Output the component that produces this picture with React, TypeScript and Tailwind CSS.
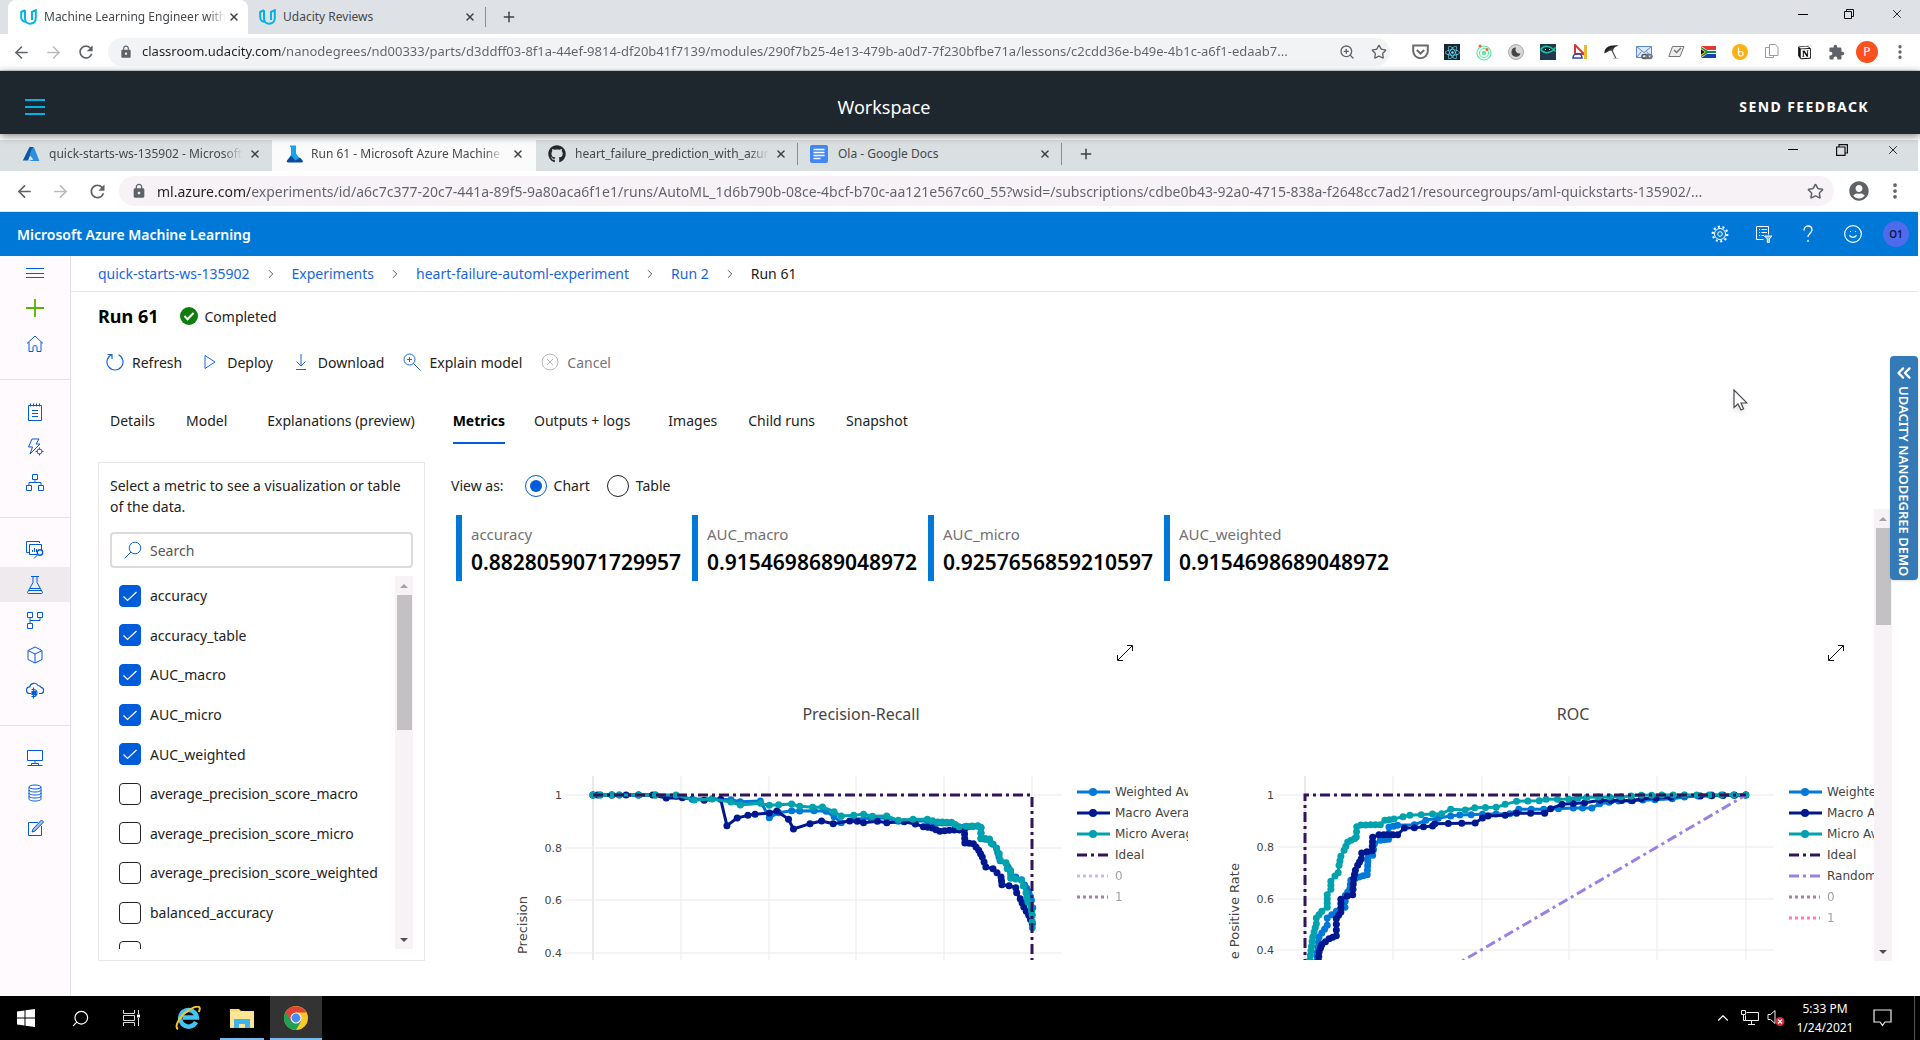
import React from "react";
import {
  ArrowLeft, ArrowRight, Star, ZoomIn, X, Plus, MoreVertical, ChevronRight, ChevronUp, ChevronsLeft, Search, Smile,
} from "lucide-react";
import { FaGithub, FaReact, FaPuzzlePiece, FaGetPocket, FaUserCircle } from "react-icons/fa";
import { MdLock, MdRefresh, MdExtension } from "react-icons/md";
import { RiNotionFill } from "react-icons/ri";

/* ---------- small drawings ---------- */

const Svg = ({ size = 18, sw = 1, children, box = 18 }: { size?: number; sw?: number; box?: number; children: React.ReactNode }) => (
  <svg width={size} height={size} viewBox={`0 0 ${box} ${box}`} fill="none" stroke="currentColor" strokeWidth={sw} aria-hidden="true" className="shrink-0">
    {children}
  </svg>
);

const UdacityLogo = () => (
  <svg width="17" height="16" viewBox="0 0 17 16" fill="none" stroke="#02b3e4" strokeWidth="2" className="shrink-0">
    <path d="M5 1.200 1.200 3v5c0 3 2 4.800 4.400 4.800" />
    <path d="M5 1.200v8.300c0 3.200 2.300 5.200 5.200 5.200 3.200 0 5.600-2.200 5.600-5.600V1.200L12 3v8" />
  </svg>
);

const AzureLogo = () => (
  <svg width="18" height="16" viewBox="0 0 18 16" className="shrink-0">
    <path d="M7.500 1h4L6 14.500H.8z" fill="#0a5aa8" />
    <path d="M9.600 3.400 12 1.200 17.400 15H6.200l5.200-1.600L7.600 9z" fill="#2a8fe0" />
  </svg>
);

const MlLogo = () => (
  <svg width="18" height="18" viewBox="0 0 18 18" className="shrink-0">
    <path d="M4 .5h6v8l6.300 8.300H1.500L5 10V2H4z" fill="#1aa3e8" />
    <path d="M5 10.500 1 15.500c-.8 1 .2 2 1 2h13.500c1.500 0 1.800-1.200 1-2L14 12.500l-4.500 3z" fill="#0b4a9e" />
  </svg>
);

const DocsLogo = () => (
  <svg width="18" height="18" viewBox="0 0 18 18" className="shrink-0">
    <rect width="18" height="18" rx="2" fill="#4285f4" />
    <path d="M3.500 4.500h11M3.500 7.500h11M3.500 10.500h11M3.500 13.500h7" stroke="#fff" strokeWidth="1.600" />
  </svg>
);

const Restore = ({ big = false }: { big?: boolean }) => (
  <svg width={big ? 12 : 10} height={big ? 12 : 10} viewBox="0 0 10 10" fill="none" stroke="#111" strokeWidth="1">
    <path d="M.5 2.500h7v7h-7zM2.500 2.500v-2h7v7h-2" />
  </svg>
);

/* ---------- browser chrome ---------- */

function TabTitle({ children, className }: { children: string; className: string }) {
  return (
    <span className={`overflow-hidden whitespace-nowrap text-left text-[12px] leading-4 text-[#45494d] ${className}`}>{children}</span>
  );
}

const fade = "[mask-image:linear-gradient(to_right,#000_90%,transparent)]";

function CloseX() {
  return (
    <button aria-label="Close tab" className="shrink-0 text-[#3c4043]">
      <X size={12} strokeWidth={3} />
    </button>
  );
}

function WindowButtons({ className, gap, big }: { className: string; gap: string; big?: boolean }) {
  return (
    <div className={`ml-auto flex items-center ${gap} ${className}`}>
      <button aria-label="Minimize"><span className="block h-px w-2.5 bg-black" /></button>
      <button aria-label="Restore"><Restore big={big} /></button>
      <button aria-label="Close"><X size={14} strokeWidth={1.500} color="#111" /></button>
    </div>
  );
}

function Extensions() {
  return (
    <div className="ml-3.5 flex items-center">
      {[
        <svg key="a" width="17" height="16" viewBox="0 0 17 16" fill="none" stroke="#6b6b6b" strokeWidth="2"><path d="M1.200 1.500h14.600v5.500c0 4-3.300 7.200-7.300 7.200S1.200 11 1.200 7z" /><path d="m4.800 6 3.700 3.500L12.200 6" /></svg>,
        <span key="b" className="flex size-4 items-center justify-center bg-[#20232a]"><FaReact size={15} color="#61dafb" /></span>,
        <svg key="c" width="18" height="18" viewBox="0 0 18 18" fill="none" stroke="#5eeaa0" strokeWidth="1.200">
          <circle cx="9" cy="10" r="7" /><circle cx="9" cy="10" r="4.500" /><circle cx="9" cy="10" r="1.700" fill="#5eeaa0" />
          <circle cx="5" cy="3" r="1.500" fill="#f5622e" stroke="none" /><circle cx="12" cy="6.500" r="1.500" fill="#f5622e" stroke="none" />
        </svg>,
        <svg key="d" width="16" height="16" viewBox="0 0 16 16"><circle cx="8" cy="8" r="7.500" fill="#d6d6d6" stroke="#aaa" /><path d="M8 3.500a4.600 4.600 0 1 0 4.500 5.800A4 4 0 0 1 8 3.500z" fill="#444" /></svg>,
        <svg key="e" width="16" height="16" viewBox="0 0 16 16"><path d="M0 0h16v16H0z" fill="#22364f" /><path d="M.5 5.500C4 1 10 1 15.500 7.500M15.500 3.500C11 10 4 10 .5 5.500" fill="none" stroke="#1fc59a" strokeWidth="1.500" /><path d="M4.500 4.500h6v2h-6z" fill="#111c2c" /><path d="M5 5h1v1H5zM9 5h1v1H9z" fill="#fff" /></svg>,
        <svg key="f" width="16" height="16" viewBox="0 0 16 16" fill="none"><path d="M3 1v9h9z" stroke="#d33a3a" strokeWidth="2" /><path d="M1 14a4.500 4.500 0 0 1 9 0z" stroke="#2647b8" strokeWidth="1.600" /><path d="M12 1h3v14h-3z" fill="#edb72f" /></svg>,
        <svg key="g" width="16" height="16" viewBox="0 0 16 16" fill="none"><path d="M.5 9.500C0 4 5 .5 14.500 1.500L8 4z" fill="#222" /><path d="M.5 9.500 7.500 3.500l7-2C10 3 9.500 5 9 7L6 6.500z" fill="#333" /><path d="m7 4.500 5 10" stroke="#555" strokeWidth="1.200" /><path d="M8 15c2-1.500 5-1.500 7 0z" fill="#bbb" /></svg>,
        <svg key="h" width="17" height="15" viewBox="0 0 17 15" fill="none"><path d="M.5 1.500h15v11H.5z" fill="#dbe9fb" stroke="#5d88c9" /><path d="m.5 1.500 7.500 6 7.500-6M.5 12.500l5-6m10 6-5-6" stroke="#5d88c9" /><rect x="6" y="9.500" width="6" height="4" rx="2" stroke="#555" strokeWidth="1.500" /><rect x="10" y="9.500" width="6" height="4" rx="2" stroke="#777" strokeWidth="1.500" /></svg>,
        <svg key="i" width="17" height="14" viewBox="0 0 17 14" fill="#eee" stroke="#777"><path d="M4.500 1.500h11.500l-4 10H.8z" /><path d="m6 5 2.500 2.500L13 3" fill="none" strokeWidth="1.500" /></svg>,
        <svg key="j" width="15" height="12" viewBox="0 0 15 12"><path d="M0 0h15v4H0z" fill="#e03c31" /><path d="M0 8h15v4H0z" fill="#1a3fb0" /><path d="M0 0l6 4h9v4H6l-6 4z" fill="#fff" /><path d="M0 1l7 4h8v2H7l-7 4z" fill="#0a8a4a" /><path d="M0 2l5 4-5 4z" fill="#ffb81c" /><path d="M0 3.500 3.500 6 0 8.500z" fill="#111" /></svg>,
        <svg key="k" width="16" height="16" viewBox="0 0 16 16"><circle cx="8" cy="8" r="8" fill="#fbb216" /><path d="M6.500 3.500v6.500a2.300 2.300 0 1 0 2-2.500L6.500 8.500" fill="none" stroke="#fff" strokeWidth="1.200" /></svg>,
        <svg key="l" width="14" height="16" viewBox="0 0 14 16" fill="#fff" stroke="#9a9a9a"><path d="M.5 3.500h8v10h-8z" /><path d="M4.500.5h6l2.500 3v8H4.500z" /></svg>,
        <RiNotionFill key="m" size={17} color="#111" />,
        <MdExtension key="n" size={17} color="#5f6368" />,
      ].map((icon, i) => (
        <button key={i} aria-label={`Extension ${i + 1}`} className="flex h-7 w-8 items-center justify-center">{icon}</button>
      ))}
      <button aria-label="Profile" className="ml-1 flex size-[22px] items-center justify-center rounded-full bg-[#fa511f] text-[12px] text-white">P</button>
      <button aria-label="Menu" className="ml-3 flex w-5 justify-center"><MoreVertical size={18} strokeWidth={2.500} color="#5f6368" /></button>
    </div>
  );
}

function OuterBrowser() {
  return (
    <header className="shrink-0">
      <div className="flex h-[34px] items-end bg-[#dee1e6] pl-2">
        <div className="flex h-[34px] w-60 items-center rounded-t-lg bg-white pl-3">
          <UdacityLogo />
          <TabTitle className={`ml-[7px] w-[182px] ${fade}`}>Machine Learning Engineer with M</TabTitle>
          <span className="ml-0.5 flex"><CloseX /></span>
        </div>
        <div className="flex h-[34px] w-[238px] items-center pl-[11px]">
          <UdacityLogo />
          <TabTitle className="ml-[7px] flex-1">Udacity Reviews</TabTitle>
          <CloseX />
          <span className="ml-[9px] h-5 w-px bg-[#8a8d91]" />
        </div>
        <button aria-label="New tab" className="flex h-[34px] items-center pl-[15px]"><Plus size={16} strokeWidth={2.200} color="#3c4043" /></button>
        <WindowButtons className="h-[28px] self-start pr-4" gap="gap-9" />
      </div>
      <div className="flex h-[37px] items-center border-b border-[#d5dadd] bg-white pl-3 pr-2.5 text-[#5f6368]">
        <button aria-label="Back" className="w-8"><ArrowLeft size={19} strokeWidth={2} /></button>
        <button aria-label="Forward" className="w-8 text-[#b9bbbe]"><ArrowRight size={19} strokeWidth={2} /></button>
        <button aria-label="Reload" className="w-8"><MdRefresh size={20} /></button>
        <div className="flex h-7 min-w-0 flex-1 items-center rounded-full bg-[#f1f3f4] pl-[11px] pr-[3px]">
          <MdLock size={14} className="shrink-0" />
          <input
            aria-label="Address"
            readOnly
            className="ml-[9px] min-w-0 flex-1 bg-[linear-gradient(to_right,#202124_139px,#5f6368_139px)] bg-clip-text text-[13px] text-transparent outline-none"
            value="classroom.udacity.com/nanodegrees/nd00333/parts/d3ddff03-8f1a-44ef-9814-df20b41f7139/modules/290f7b25-4e13-479b-a0d7-7f230bfbe71a/lessons/c2cdd36e-b49e-4b1c-a6f1-edaab7..."
          />
          <button aria-label="Zoom" className="w-8"><ZoomIn size={16} /></button>
          <button aria-label="Bookmark"><Star size={16} /></button>
        </div>
        <Extensions />
      </div>
    </header>
  );
}

function WorkspaceBar() {
  return (
    <div className="relative z-10 flex h-[63px] shrink-0 items-center bg-[#1e272e] pl-[25px] pr-[51px] pt-2 shadow-[0_2px_8px_rgba(0,0,0,0.5)]">
      <button aria-label="Open navigation" className="flex w-10 flex-col gap-[5px]">
        <span className="h-0.5 w-5 bg-[#02b3e4]" />
        <span className="h-0.5 w-5 bg-[#02b3e4]" />
        <span className="h-0.5 w-5 bg-[#02b3e4]" />
      </button>
      <h1 className="flex-1 pr-[26px] text-center text-[18px] leading-6 text-white">Workspace</h1>
      <button className="w-[140px] whitespace-nowrap text-right text-[14px] font-bold tracking-widest text-white">SEND FEEDBACK</button>
    </div>
  );
}

function InnerBrowser() {
  return (
    <div className="shrink-0 pr-0.5 pt-1.5">
      <div className="flex h-[31px] items-stretch bg-[#dadfe2]">
        <div className="flex w-[272px] items-center rounded-br-lg pb-1 pl-[22px]">
          <AzureLogo />
          <TabTitle className={`ml-[9px] w-[193px] ${fade}`}>quick-starts-ws-135902 - Microsoft</TabTitle>
          <span className="ml-[7px] flex"><CloseX /></span>
        </div>
        <div className="flex w-[264px] items-center bg-[#fbfbfb] pb-1 pl-[14px]">
          <MlLogo />
          <TabTitle className={`ml-[7px] w-[193px] ${fade}`}>Run 61 - Microsoft Azure Machine</TabTitle>
          <span className="ml-[8px] flex"><CloseX /></span>
        </div>
        <div className="flex w-[263px] items-center pb-1 pl-[12px]">
          <FaGithub size={18} color="#24292e" className="shrink-0" />
          <TabTitle className={`ml-[9px] w-[194px] ${fade}`}>heart_failure_prediction_with_azure</TabTitle>
          <span className="ml-[6px] flex"><CloseX /></span>
          <span className="ml-[10px] h-[22px] w-px bg-[#8a8d91]" />
        </div>
        <div className="flex w-[263px] items-center pb-1 pl-[11px]">
          <DocsLogo />
          <TabTitle className="ml-[10px] flex-1">Ola - Google Docs</TabTitle>
          <CloseX />
          <span className="ml-[10px] h-[22px] w-px bg-[#8a8d91]" />
        </div>
        <button aria-label="New tab" className="pb-1 pl-4"><Plus size={16} strokeWidth={2.200} color="#3c4043" /></button>
        <WindowButtons className="pb-3 pr-[18px]" gap="gap-[38px]" big />
      </div>
      <div className="flex h-[41px] items-center border-b border-[#e3e6e8] bg-white pl-[15px] pr-[13px] text-[#5f6368]">
        <button aria-label="Back" className="w-9"><ArrowLeft size={19} strokeWidth={2.200} /></button>
        <button aria-label="Forward" className="w-9 text-[#b9bbbe]"><ArrowRight size={19} strokeWidth={2.200} /></button>
        <button aria-label="Reload" className="w-8"><MdRefresh size={21} /></button>
        <div className="flex h-[30px] min-w-0 flex-1 items-center rounded-full bg-[#f6f2f6] pl-3 pr-2.5">
          <MdLock size={16} className="shrink-0" />
          <input
            aria-label="Address of remote page"
            readOnly
            className="ml-2.5 min-w-0 flex-1 bg-[linear-gradient(to_right,#202124_93px,#5f6368_93px)] bg-clip-text text-[14px] text-transparent outline-none"
            value="ml.azure.com/experiments/id/a6c7c377-20c7-441a-89f5-9a80aca6f1e1/runs/AutoML_1d6b790b-08ce-4bcf-b70c-aa121e567c60_55?wsid=/subscriptions/cdbe0b43-92a0-4715-838a-f2648cc7ad21/resourcegroups/aml-quickstarts-135902/..."
          />
          <button aria-label="Bookmark page"><Star size={17} strokeWidth={2.200} /></button>
        </div>
        <button aria-label="Account" className="ml-[15px]"><FaUserCircle size={20} /></button>
        <button aria-label="More" className="ml-4"><MoreVertical size={20} strokeWidth={2.500} /></button>
      </div>
    </div>
  );
}

/* ---------- Azure ML studio ---------- */

function AzureBar() {
  return (
    <div className="flex h-11 shrink-0 items-center justify-between bg-[#0078d7] pl-[17px] pr-[9px] text-white">
      <span className="text-[14px] font-semibold">Microsoft Azure Machine Learning</span>
      <div className="flex items-center gap-[26px]">
        <button aria-label="Settings">
          <Svg><circle cx="9" cy="9" r="5.500" /><circle cx="9" cy="9" r="2.300" /><circle cx="9" cy="9" r="7.300" strokeWidth="2.200" strokeDasharray="2 2.580" /></Svg>
        </button>
        <button aria-label="Filter list">
          <Svg><path d="M8.500 14.500h-7v-13h12v8M4 4.500h1M6.500 4.500H12M4 7.500h1M6.500 7.500H12M4 10.500h1M6.500 10.500H9" /><path d="M9.500 11h7.500l-2.700 3v3.500h-2V14z" fill="currentColor" fillOpacity=".5" /></Svg>
        </button>
        <button aria-label="Help">
          <Svg sw={1.300}><path d="M5 5.500C5 3 6.500 1 9 1s4 1.500 4 4c0 3-4 3.500-4 7M9 15v2" /></Svg>
        </button>
        <button aria-label="Feedback"><Smile size={20} strokeWidth={1.400} /></button>
        <button aria-label="Account O1" className="-ml-1.5 flex size-[26px] items-center justify-center rounded-full bg-[#4f6bed] text-[10px] font-semibold text-[#14143c]">O1</button>
      </div>
    </div>
  );
}

const navGroups = [
  [
    { name: "Notebooks", icon: <Svg><path d="M2.500 2.500h13v15h-13zM4.500.5v3M7.500.5v3M10.500.5v3M13.500.5v3M6 7.500h6M6 10.500h6M6 13.500h6" /></Svg> },
    { name: "Automated ML", icon: <Svg><path d="M6 1h7l-3 5h4L4 16l2.500-7h-4L6 1z" /><circle cx="13.500" cy="13.500" r="2.500" fill="#fffafe" /><path d="M13.500 9.500v2M13.500 15.500v2M9.500 13.500h2M15.500 13.500h2" /></Svg> },
    { name: "Designer", icon: <Svg><path d="M6.500 1.500h5v5h-5zM.5 12.500h5v5h-5zM12.500 12.500h5v5h-5zM9 6.500v3M3 12.500v-3h12v3" /></Svg> },
  ],
  [
    { name: "Datasets", icon: <Svg><path d="M3 11.500H.5v-11h13V2M11 13.500H3.500v-10h12V9M6.500 11V9M8.500 11V7M10.500 11V8" /><circle cx="14" cy="11.500" r="2.700" strokeWidth="1.400" /><path d="m12 13.500-4 4" /></Svg> },
    { name: "Experiments", active: true, icon: <Svg><path d="M5 .5h8M7 .5v6L1.700 16c-.4.8 0 1.500.8 1.500h13c.8 0 1.200-.7.8-1.500L11 6.500v-6M4 12.500h10M3 14.500h12" /></Svg> },
    { name: "Pipelines", icon: <Svg><path d="M1.500 1.500h5v5h-5zM11.500 1.500h5v5h-5zM1.500 12.500h5v5h-5zM4 6.500v6M4 9.500h10v-3" /></Svg> },
    { name: "Models", icon: <Svg><path d="m9 1 7 3.500v9L9 17l-7-3.500v-9zM2 4.500 9 8l7-3.500M9 8v9" /></Svg> },
    { name: "Endpoints", icon: <Svg sw={1.200}><path d="M5 12.500H4a3.300 3.300 0 0 1-.3-6.600A4.500 4.500 0 0 1 12 4.500a3.500 3.500 0 0 1 3 1.800 3.200 3.200 0 0 1 .5 6.200H13" /><path d="M5.500 8.500h2a3.500 3.500 0 1 1 0 7h-2M7.500 6.500v11" /><path d="M6 10.500h3.500v3H6z" fill="currentColor" /></Svg> },
  ],
  [
    { name: "Compute", icon: <Svg><path d="M1.500 1.500h15v10h-15zM9 11.500v3M1.500 16.500h15M5.500 14.500h7v2h-7z" /></Svg> },
    { name: "Datastores", icon: <Svg><ellipse cx="9" cy="3" rx="6" ry="2" /><path d="M3 3v12c0 1.200 2.700 2 6 2s6-.8 6-2V3M3 6c0 1.200 2.700 2 6 2s6-.8 6-2M3 9c0 1.200 2.700 2 6 2s6-.8 6-2M3 12c0 1.200 2.700 2 6 2s6-.8 6-2" /></Svg> },
    { name: "Data Labeling", icon: <Svg><path d="M15.500 7v9.500h-13v-13H12" /><path d="m6 13 1-3 8.500-9 2 2L9 12z" fill="#9dbff3" /></Svg> },
  ],
];

function Sidebar() {
  return (
    <aside className="flex w-[71px] shrink-0 flex-col border-r border-[#e6e0e4] bg-[#fffafe] text-[#015cda]">
      <div className="flex h-[124px] flex-col items-center border-b border-[#e6e0e4]">
        <button aria-label="Menu" className="flex h-[34px] items-center"><Svg><path d="M0 4.500h18M0 9.500h18M0 13.500h18" /></Svg></button>
        <button aria-label="New" className="flex h-9 items-center text-[#57b300]"><Svg sw={1.800}><path d="M9 0v18M0 9h18" /></Svg></button>
        <button aria-label="Home" className="flex h-9 items-center"><Svg><path d="M1 8.500 9 1l8 7.500M3 7v9.500h4v-5c0-1 4-1 4 0v5h4V7" /></Svg></button>
      </div>
      {navGroups.map((group, i) => (
        <nav key={i} className={i < 2 ? "flex flex-col border-b border-[#e6e0e4] pb-[18px] pt-3.5" : "flex flex-col py-3.5"}>
          {group.map((item) => (
            <a key={item.name} href="#" aria-label={item.name} className={`flex h-[35px] items-center justify-center ${item.active ? "bg-[#eeeaee]" : ""}`}>
              {item.icon}
            </a>
          ))}
        </nav>
      ))}
    </aside>
  );
}

function Breadcrumb() {
  const crumbs = ["quick-starts-ws-135902", "Experiments", "heart-failure-automl-experiment", "Run 2"];
  return (
    <nav aria-label="Breadcrumb" className="flex h-9 shrink-0 items-center border-b border-[#e6e2e6] pl-[27px] text-[14px]">
      {crumbs.map((c) => (
        <React.Fragment key={c}>
          <a href="#" className="text-[#1a66dd]">{c}</a>
          <ChevronRight size={14} strokeWidth={1.500} className="mx-3.5 text-[#444]" />
        </React.Fragment>
      ))}
      <span className="text-[#222]">Run 61</span>
    </nav>
  );
}

function Commands() {
  const items = [
    { label: "Refresh", icon: <Svg sw={1.200}><path d="M5.500 1.800A8 8 0 1 0 12.500 1.800M1.500 1.500h4.500V6" /></Svg> },
    { label: "Deploy", icon: <Svg><path d="M4 2.500v13L14 9z" /></Svg> },
    { label: "Download", icon: <Svg><path d="M9 1v12M4.500 8.500 9 13l4.500-4.500M4 16.500h10" /></Svg> },
    { label: "Explain model", icon: <Svg><circle cx="6.500" cy="6.500" r="5.500" /><path d="m10.500 10.500 7 7M4 6.500h5M6.500 4v5" /></Svg> },
  ];
  return (
    <div className="flex h-11 shrink-0 items-center gap-[19px] pl-[35px] text-[14px]">
      {items.map((it) => (
        <button key={it.label} className="flex items-center gap-2 text-[#222]">
          <span className="text-[#1a66dd]">{it.icon}</span>
          {it.label}
        </button>
      ))}
      <button disabled className="flex items-center gap-2 text-[#77757a]">
        <span className="text-[#b9b7bb]"><Svg><circle cx="9" cy="9" r="8" /><path d="m6 6 6 6M12 6l-6 6" /></Svg></span>
        Cancel
      </button>
    </div>
  );
}

function Tabs() {
  const tabs = [
    ["Details", "mr-[31px]"], ["Model", "mr-10"], ["Explanations (preview)", "mr-[38px]"], ["Metrics", "mr-[29px]"],
    ["Outputs + logs", "mr-[38px]"], ["Images", "mr-[31px]"], ["Child runs", "mr-[31px]"], ["Snapshot", ""],
  ];
  return (
    <div role="tablist" className="mt-3 flex h-12 shrink-0 pl-[39px] text-[14px]">
      {tabs.map(([t, m]) => (
        <button
          key={t}
          role="tab"
          aria-selected={t === "Metrics"}
          className={`${m} border-y-2 border-t-transparent ${t === "Metrics" ? "border-b-[#015cda] font-bold text-black" : "border-b-transparent text-[#222]"}`}
        >
          {t}
        </button>
      ))}
    </div>
  );
}

function ScrollBar({ thumb, className }: { thumb: string; className: string }) {
  return (
    <div aria-hidden="true" className={`flex w-[18px] shrink-0 flex-col items-center bg-[#f6f2f6] ${className}`}>
      <span className="flex h-[19px] items-center"><svg width="8" height="4"><path d="M0 4 4 0l4 4z" fill="#a3a1a3" /></svg></span>
      <span className={`w-[15px] bg-[#c4c1c4] ${thumb}`} />
      <span className="mt-auto flex h-[19px] items-center"><svg width="8" height="4"><path d="M0 0l4 4 4-4z" fill="#504e50" /></svg></span>
    </div>
  );
}

const metrics = [
  "accuracy", "accuracy_table", "AUC_macro", "AUC_micro", "AUC_weighted", "average_precision_score_macro",
  "average_precision_score_micro", "average_precision_score_weighted", "balanced_accuracy",
];

function MetricBox({ name, checked }: { name: string; checked: boolean }) {
  return (
    <span className="relative flex">
      <input type="checkbox" aria-label={name} defaultChecked={checked} className="peer size-[22px] appearance-none rounded-sm border border-[#222] bg-white checked:border-[#015cda] checked:bg-[#015cda]" />
      <svg viewBox="0 0 22 22" className="pointer-events-none absolute inset-0 hidden size-[22px] peer-checked:block" fill="none" stroke="#fff" strokeWidth="1.200">
        <path d="m4.500 11.500 4 4 9-8.500" />
      </svg>
    </span>
  );
}

function MetricPicker() {
  return (
    <section className="flex w-[327px] shrink-0 flex-col border border-[#eae6ea] px-[11px] pb-[11px] pt-3">
      <p className="text-[14px] leading-[21px] text-[#222]">Select a metric to see a visualization or table of the data.</p>
      <label className="mt-[15px] flex h-9 shrink-0 items-center rounded-sm border-2 border-[#dddadd] pl-3">
        <Svg><circle cx="11" cy="7" r="5.800" stroke="#1a66dd" /><path d="m7 11-6.500 6.500" stroke="#1a66dd" /></Svg>
        <input aria-label="Search metrics" placeholder="Search" className="ml-2 w-full bg-transparent text-[14px] outline-none placeholder:text-[#555]" />
      </label>
      <div className="mt-2 flex min-h-0 flex-1">
        <div className="flex-1 overflow-hidden pl-[9px]">
          <ul className="grid h-[396px] auto-rows-fr">
            {metrics.map((m, i) => (
              <li key={m} className="flex items-center">
                <label className="flex items-center gap-[9px] whitespace-nowrap text-[14px] text-[#222]">
                  <MetricBox name={m} checked={i < 5} />
                  {m}
                </label>
              </li>
            ))}
            <li className="flex items-center"><MetricBox name="confusion_matrix" checked={false} /></li>
          </ul>
        </div>
        <ScrollBar className="" thumb="h-[135px]" />
      </div>
    </section>
  );
}

/* ---------- charts ---------- */

type Pt = [number, number];
const parse = (s: string): Pt[] => s.split(" ").map((p) => p.split(",").map(Number) as Pt);

const BLUE = "#0078d7";
const NAVY = "#00188f";
const TEAL = "#00a2ad";

const prWeighted = "0,0 16,0 42,0 59,0 102,0 140,0 186,4 222,13 267,11 309,14 330,20 375,18 395,68 416,53 445,47 463,48 495,47 522,49 540,65 556,83 584,73 622,69 658,69 684,79 717,79 749,77 772,84 803,84 820,97 862,94 869,99 869,131 888,134 904,161 912,197 925,205 935,228 936,249 947,246 960,254 967,270 976,290 982,316 985,338";
const prMacro = "0,0 10,0 42,0 74,0 102,0 134,0 164,9 200,8 249,16 286,13 300,92 323,69 347,61 363,58 395,54 412,48 438,73 449,102 486,86 512,78 538,86 575,78 592,79 606,83 637,79 658,83 697,80 722,87 740,95 760,99 777,109 798,106 832,104 833,144 852,146 864,166 872,186 880,216 896,221 905,233 914,246 916,269 932,272 947,278 949,293 957,311 965,336 976,361 984,386";
const prMicro = "0,0 16,0 42,0 59,0 102,0 140,0 186,0 227,15 267,12 309,21 330,30 375,25 395,31 416,29 445,27 463,34 492,37 514,36 540,50 556,63 584,61 606,58 626,64 658,63 684,76 717,73 749,73 772,81 803,82 820,95 836,94 862,92 869,97 869,129 888,132 892,145 904,159 910,176 912,195 925,203 928,221 935,226 936,249 947,252 960,256 964,273 970,293 974,321 981,336 984,361 984,398";
const rocWeighted = "25,511 27,471 31,426 49,391 49,369 69,349 88,337 89,301 99,281 101,256 119,246 137,239 139,186 149,181 153,146 166,136 184,133 185,96 204,91 241,89 266,76 321,63 341,60 391,58 451,56 471,43 526,43 591,39 632,39 649,26 691,18 771,14 809,11 836,6 896,0 971,0";
const rocMacro = "29,511 31,471 37,449 53,431 69,422 69,371 79,351 79,313 93,303 105,299 107,251 111,226 116,211 124,191 125,174 148,167 149,127 163,119 204,119 219,99 241,98 281,93 286,86 375,84 391,69 403,63 441,61 466,55 528,55 541,41 566,28 616,23 651,16 721,17 741,11 806,7 836,1 871,3 971,0";
const rocMicro = "9,511 12,481 17,426 20,411 25,386 25,369 37,349 49,337 49,299 57,283 57,259 66,243 73,233 75,211 79,184 86,166 94,141 109,131 113,126 114,95 123,90 166,89 176,76 196,72 216,65 231,61 281,57 301,56 321,43 353,45 374,38 421,37 441,28 466,19 516,17 531,13 581,12 621,7 696,5 741,1 786,0 836,0 971,0";

interface Legend { label: string; color: string; kind: "line" | "dashdot" | "dot" }

/* Adds sample markers along a series: closely spaced from x = `dense` to x = `until`,
   and every `step` pixels elsewhere (0 keeps only the given samples). */
function markers(pts: Pt[], dense: number, until: number, step: number): Pt[] {
  const out: Pt[] = [pts[0]];
  for (let i = 1; i < pts.length; i++) {
    const [ax, ay] = pts[i - 1];
    const [bx, by] = pts[i];
    const gap = ax >= dense && ax <= until ? 5 : step;
    const n = gap ? Math.max(1, Math.round(Math.hypot(bx - ax, by - ay) / gap)) : 1;
    for (let k = 1; k <= n; k++) out.push([ax + ((bx - ax) * k) / n, ay + ((by - ay) * k) / n]);
  }
  return out;
}

function Series({ data, color, sx, dense, until, step }: { data: string; color: string; sx: number; dense: number; until: number; step: number }) {
  const pts = parse(data).map(([x, y]): Pt => [117 + x / sx, 126 + y / 3]);
  return (
    <g>
      <polyline points={pts.map((p) => p.join(",")).join(" ")} fill="none" stroke={color} strokeWidth="3" strokeLinejoin="round" />
      {markers(pts, dense, until, step).map(([x, y], i) => <circle key={i} cx={x} cy={y} r="3.500" fill={color} />)}
    </g>
  );
}

function Chart(props: {
  title: string; axis: string; axisY: number; gridX: number[]; gridY: number[]; legend: Legend[]; children: React.ReactNode;
}) {
  const { title, axis, axisY, gridX, gridY, legend, children } = props;
  return (
    <article className="flex min-w-0 flex-col overflow-hidden pt-16">
      <button aria-label={`Expand ${title}`} className="mr-[55px] h-4 self-end">
        <Svg size={16} box={16}><path d="M1 15 15 1M10 .5h5.500V6M.5 10v5.500H6" stroke="#111" /></Svg>
      </button>
      <svg width="712" height="291" className="mt-2 shrink-0" role="img" aria-label={title} fontFamily='"DejaVu Sans", sans-serif' fill="#444">
        <text x="385" y="51" fontSize="16" textAnchor="middle" fontFamily='"Noto Sans", sans-serif'>{title}</text>
        <g stroke="#ebe8eb">
          {gridX.map((x, i) => <path key={x} d={`M${x} 107V291`} strokeWidth={i ? 1 : 2} />)}
          {gridY.map((y) => <path key={y} d={`M89 ${y}H586`} />)}
        </g>
        {gridY.map((y, i) => (
          <text key={y} x="86" y={y + 4} fontSize="11" textAnchor="end">{["1", "0.8", "0.6", "0.4"][i]}</text>
        ))}
        <text fontSize="13" textAnchor="middle" transform={`translate(51 ${axisY}) rotate(-90)`}>{axis}</text>
        {children}
        {legend.map(({ label, color, kind }, i) => (
          <g key={label} transform={`translate(601 ${123 + i * 21})`}>
            <path
              d={kind === "line" ? "M0 0H33" : "M0 0H31"}
              stroke={color}
              strokeWidth="3"
              strokeDasharray={kind === "line" ? undefined : kind === "dot" ? "3 3" : "10 4 3 4"}
              opacity={kind === "dot" ? 0.6 : 1}
            />
            {kind === "line" && <circle cx="16" r="4" fill={color} />}
            <text x="38" y="4" fontSize="12" opacity={kind === "dot" ? 0.5 : 1}>{label}</text>
          </g>
        ))}
      </svg>
    </article>
  );
}

const baseLegend: Legend[] = [
  { label: "Weighted Average", color: BLUE, kind: "line" },
  { label: "Macro Average", color: NAVY, kind: "line" },
  { label: "Micro Average", color: TEAL, kind: "line" },
  { label: "Ideal", color: "#32145a", kind: "dashdot" },
];

function Results() {
  const scores = [
    ["accuracy", "0.8828059071729957"], ["AUC_macro", "0.9154698689048972"],
    ["AUC_micro", "0.9257656859210597"], ["AUC_weighted", "0.9154698689048972"],
  ];
  return (
    <section className="ml-[26px] flex min-w-0 flex-1 flex-col">
      <div role="radiogroup" aria-label="View as" className="flex h-[47px] shrink-0 items-center text-[14px] text-[#222]">
        <span className="mr-[21px]">View as:</span>
        {["Chart", "Table"].map((v, i) => (
          <label key={v} className="mr-[17px] flex items-center gap-[7px]">
            <span className="relative flex">
              <input type="radio" name="view" defaultChecked={i === 0} className="peer size-[22px] appearance-none rounded-full border border-[#222] checked:border-[#015cda]" />
              <span className="pointer-events-none absolute inset-[5px] hidden rounded-full bg-[#015cda] peer-checked:block" />
            </span>
            {v}
          </label>
        ))}
      </div>
      <div className="flex min-h-0 flex-1">
        <div className="min-w-0 flex-1 overflow-hidden pt-1.5">
          <div className="flex gap-[11px] pl-[5px]">
            {scores.map(([k, v]) => (
              <div key={k} className="flex h-[66px] flex-col justify-center border-l-[6px] border-[#0078d7] pl-[9px]">
                <span className="text-[15px] leading-7 text-[#727074]">{k}</span>
                <span className="text-[21px] font-semibold leading-7 text-black">{v}</span>
              </div>
            ))}
          </div>
          <div className="-mr-[25px] grid grid-cols-2 pl-[25px]">
            <Chart
              title="Precision-Recall"
              axis="Precision"
              axisY={256}
              gridX={[117, 205, 293, 380, 468, 556]}
              gridY={[126, 179, 231, 284]}
              legend={[...baseLegend, { label: "0", color: "#a98ae8", kind: "dot" }, { label: "1", color: "#6b2f63", kind: "dot" }]}
            >
              <Series data={prWeighted} color={BLUE} sx={2.24} dense={440} until={600} step={0} />
              <Series data={prMacro} color={NAVY} sx={2.24} dense={440} until={600} step={0} />
              <Series data={prMicro} color={TEAL} sx={2.24} dense={440} until={600} step={0} />
              <path d="M117 126H556V291" fill="none" stroke="#32145a" strokeWidth="3" strokeDasharray="10 4 3 4" />
            </Chart>
            <Chart
              title="ROC"
              axis="True Positive Rate"
              axisY={252}
              gridX={[117, 205, 294, 381, 469, 558]}
              gridY={[126, 178, 230, 281]}
              legend={[
                ...baseLegend,
                { label: "Random", color: "#9b80e6", kind: "dashdot" },
                { label: "0", color: "#6b2f63", kind: "dot" },
                { label: "1", color: "#ff1fa8", kind: "dot" },
              ]}
            >
              <Series data={rocWeighted} color={BLUE} sx={2.203} dense={110} until={205} step={12} />
              <Series data={rocMacro} color={NAVY} sx={2.203} dense={110} until={205} step={12} />
              <Series data={rocMicro} color={TEAL} sx={2.203} dense={110} until={205} step={12} />
              <path d="M117 384 558 126" stroke="#9b80e6" strokeWidth="3" strokeDasharray="10 4 3 4" />
              <path d="M117 300V126H558" fill="none" stroke="#32145a" strokeWidth="3" strokeDasharray="10 4 3 4" />
            </Chart>
          </div>
        </div>
        <ScrollBar className="mr-[26px]" thumb="h-[97px]" />
      </div>
    </section>
  );
}

function Taskbar() {
  return (
    <footer className="flex h-11 shrink-0 items-stretch bg-black text-white">
      <button aria-label="Start" className="flex w-[52px] items-center justify-center">
        <svg width="18" height="18" viewBox="0 0 18 18" fill="#fff"><path d="M0 2.500 7.500 1.500v7H0zM8.500 1.300 18 0v8.500H8.500zM0 9.500h7.500v7L0 15.500zM8.500 9.500H18V18l-9.500-1.300z" /></svg>
      </button>
      <button aria-label="Search" className="flex w-14 items-center justify-center"><Search size={19} strokeWidth={1.500} className="-scale-x-100" /></button>
      <button aria-label="Task view" className="flex w-12 items-center justify-center">
        <svg width="18" height="16" viewBox="0 0 18 16" fill="none" stroke="#ddd"><path d="M.5 0v3.500h11V0M.5 5.500h11v5H.5zM.5 16v-3.500h11V16M15.500 0v4M15.500 8v8" /><path d="M14 4.500h3v3h-3z" fill="#fff" stroke="none" /></svg>
      </button>
      <button aria-label="Internet Explorer" className="flex w-16 items-center justify-center">
        <svg width="26" height="24" viewBox="0 0 26 24" fill="none">
          <path d="M21 16a8.300 8.300 0 1 1 .8-4.500H8" stroke="#45c3f0" strokeWidth="4.500" />
          <path d="M3 23C-1 21 4 12 10 7S23-1 24.500 1.500c.8 1.200 0 3-.8 4.500" stroke="#f6c72c" strokeWidth="2" />
        </svg>
      </button>
      <button aria-label="File Explorer" className="flex w-11 items-center justify-center border-y-2 border-b-[#76b9ed] border-t-transparent">
        <svg width="24" height="20" viewBox="0 0 24 20"><path d="M0 1h9l2 2h13v17H0z" fill="#f8d775" /><path d="M0 3.500h24V19H0z" fill="#ffe694" /><path d="M4 20v-9h16v9h-5v-4H9v4z" fill="#3eb4ea" /></svg>
      </button>
      <button aria-label="Google Chrome" className="ml-[6px] flex w-[52px] items-center justify-center border-y-2 border-b-[#76b9ed] border-t-[#333] bg-[#333]">
        <svg width="24" height="24" viewBox="0 0 24 24">
          <circle cx="12" cy="12" r="12" fill="#fbc926" />
          <path d="M12 12 1.600 6A12 12 0 0 0 12 24l5.200-9z" fill="#1fa054" />
          <path d="M12 12 6.800 15 1.600 6A12 12 0 0 1 22.400 6.600H12z" fill="#de4437" />
          <circle cx="12" cy="12" r="5.500" fill="#f4f4f4" /><circle cx="12" cy="12" r="4.400" fill="#4a8af4" />
        </svg>
      </button>
      <div className="ml-auto flex items-center">
        <button aria-label="Hidden icons"><ChevronUp size={18} strokeWidth={1.500} /></button>
        <button aria-label="Network" className="ml-[9px]">
          <svg width="18" height="16" viewBox="0 0 18 16" fill="none" stroke="#eee"><path d="M5.500 2.500h12v8H4.500v-5M10.500 10.500v4M7 14.500h7M.5.5h4v4h-4zM2.500 4.500v6h2" /></svg>
        </button>
        <button aria-label="Volume muted" className="ml-2">
          <svg width="18" height="18" viewBox="0 0 18 18" fill="none"><path d="M1 5.500h2.500L8 1.500v13l-4.500-4H1z" stroke="#eee" /><circle cx="13" cy="12.500" r="4.500" fill="#e02b35" /><path d="m11 10.500 4 4m0-4-4 4" stroke="#fff" strokeWidth="1.200" /></svg>
        </button>
        <div className="w-[80px] text-center text-[12px] leading-[19px]">
          <div>5:33 PM</div>
          <div>1/24/2021</div>
        </div>
        <button aria-label="Notifications" className="ml-2">
          <svg width="19" height="18" viewBox="0 0 19 18" fill="none" stroke="#eee" strokeWidth="1.200"><path d="M1 1h17v12h-6l-2.500 3.500L7 13H1z" /></svg>
        </button>
        <span className="ml-[22px] mr-[5px] h-11 w-px bg-[#555]" />
      </div>
    </footer>
  );
}

export default function App() {
  return (
    <div className='relative flex h-screen flex-col overflow-hidden bg-white font-["Noto_Sans","Open_Sans",sans-serif]'>
      <OuterBrowser />
      <WorkspaceBar />
      <InnerBrowser />
      <div className="mr-0.5 flex min-h-0 flex-1 flex-col">
        <AzureBar />
        <div className="flex min-h-0 flex-1">
          <Sidebar />
          <main className="flex min-w-0 flex-1 flex-col">
            <Breadcrumb />
            <div className="flex h-12 shrink-0 items-center pl-[27px]">
              <h2 className="text-[18px] font-bold text-black">Run 61</h2>
              <svg width="18" height="18" viewBox="0 0 18 18" className="ml-[22px]"><circle cx="9" cy="9" r="9" fill="#107c10" /><path d="m4.500 9 3 3.200L13.500 6" fill="none" stroke="#fff" strokeWidth="2" /></svg>
              <span className="ml-1.5 text-[14px] text-[#222]">Completed</span>
            </div>
            <Commands />
            <Tabs />
            <div className="mb-[35px] mt-[18px] flex min-h-0 flex-1 pl-[27px]">
              <MetricPicker />
              <Results />
            </div>
          </main>
        </div>
      </div>
      <Taskbar />
      <button className="absolute right-0.5 top-[356px] flex h-[224px] w-7 flex-col items-center rounded-sm bg-[#337ab7] pt-1.5 text-white shadow">
        <ChevronsLeft size={22} strokeWidth={2.500} className="shrink-0" />
        <span className="mt-0.5 whitespace-nowrap text-[13px] font-semibold leading-6 [writing-mode:vertical-rl]">UDACITY NANODEGREE DEMO</span>
      </button>
      <svg className="pointer-events-none absolute left-[1733px] top-[389px] drop-shadow-md" width="15" height="22" viewBox="0 0 15 22" aria-hidden="true">
        <path d="M1 1v17.500l4-3.500 3 6 2.500-1.200L8 14h6z" fill="#fff" stroke="#4a4754" strokeWidth="1.200" />
      </svg>
    </div>
  );
}
